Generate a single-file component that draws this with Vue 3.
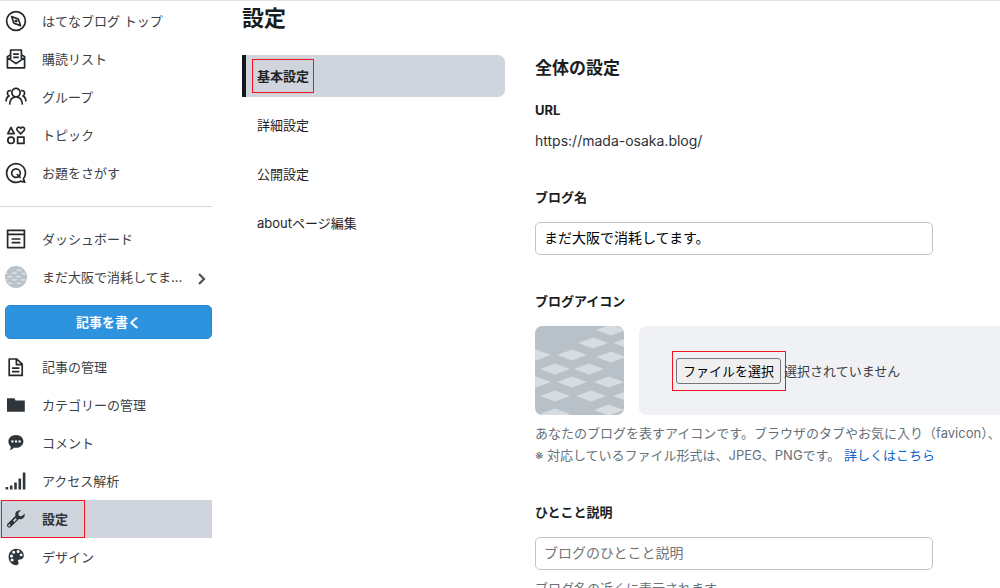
<template>
  <div class="page">
    <aside class="sidebar">
      <nav class="side-nav" aria-label="はてなブログ">
        <a v-for="item in globalItems" :key="item.label" href="#" class="side-link">
          <svg class="side-icon" :class="{ solid: item.solid }" viewBox="0 0 22 22" aria-hidden="true">
            <path :d="icons[item.icon]" />
          </svg>
          <span>{{ item.label }}</span>
        </a>
      </nav>

      <hr class="divider" />

      <nav class="side-nav" aria-label="ブログ">
        <a href="#" class="side-link">
          <svg class="side-icon" viewBox="0 0 22 22" aria-hidden="true">
            <path :d="icons.dashboard" />
          </svg>
          <span>ダッシュボード</span>
        </a>
        <a href="#" class="side-link">
          <svg class="side-avatar" viewBox="0 0 89 89" aria-hidden="true">
            <rect class="tile-bg" width="89" height="89" />
            <path v-for="(t, i) in tiles" :key="i" class="tile" :d="tilePath(t)" />
          </svg>
          <span class="blog-name">まだ大阪で消耗してま...</span>
          <svg class="chevron" viewBox="0 0 10 16" aria-hidden="true">
            <path d="M2 5l5 5-5 5" />
          </svg>
        </a>
      </nav>

      <button type="button" class="write-button">記事を書く</button>

      <nav class="side-nav" aria-label="ブログ管理">
        <a
          v-for="item in blogItems"
          :key="item.label"
          href="#"
          class="side-link"
          :class="{ current: item.current }"
        >
          <svg class="side-icon" :class="{ solid: item.solid }" viewBox="0 0 22 22" aria-hidden="true">
            <path :d="icons[item.icon]" />
          </svg>
          <span>{{ item.label }}</span>
          <span v-if="item.current" class="mark mark-side"></span>
        </a>
      </nav>
    </aside>

    <section class="tabs-column">
      <h1 class="page-title">設定</h1>
      <nav class="tabs" aria-label="設定">
        <a v-for="tab in tabs" :key="tab" href="#" class="tab" :class="{ active: tab === activeTab }">
          <span class="tab-label">{{ tab }}<span v-if="tab === activeTab" class="mark mark-tab"></span></span>
        </a>
      </nav>
    </section>

    <main class="content">
      <h2 class="section-title">全体の設定</h2>

      <div class="field">
        <h3 class="field-label">URL</h3>
        <p class="url">https://mada-osaka.blog/</p>
      </div>

      <div class="field">
        <label class="field-label" for="blog-name">ブログ名</label>
        <input id="blog-name" v-model="blogName" class="text-input" type="text" />
      </div>

      <div class="field">
        <h3 class="field-label">ブログアイコン</h3>
        <div class="icon-row">
          <svg class="blog-icon" viewBox="0 0 89 89" aria-hidden="true">
            <rect class="tile-bg" width="89" height="89" />
            <path v-for="(t, i) in tiles" :key="i" class="tile" :d="tilePath(t)" />
          </svg>
          <div class="file-box">
            <input ref="fileInput" type="file" accept="image/png,image/jpeg" hidden />
            <span class="file-pick">
              <button type="button" class="file-button" @click="fileInput.click()">ファイルを選択</button>
              <span class="mark mark-file"></span>
            </span>
            <span>選択されていません</span>
          </div>
        </div>
        <p class="help">
          あなたのブログを表すアイコンです。ブラウザのタブやお気に入り（favicon）、ス<br />
          ※ 対応しているファイル形式は、JPEG、PNGです。 <a href="#" class="help-link">詳しくはこちら</a>
        </p>
      </div>

      <div class="field">
        <label class="field-label" for="blog-description">ひとこと説明</label>
        <input id="blog-description" class="text-input" type="text" placeholder="ブログのひとこと説明" />
        <p class="help">ブログ名の近くに表示されます。</p>
      </div>
    </main>
  </div>
</template>

<script setup>
import { ref } from 'vue'

const blogName = ref('まだ大阪で消耗してます。')
const fileInput = ref(null)

const tabs = ['基本設定', '詳細設定', '公開設定', 'aboutページ編集']
const activeTab = ref('基本設定')

const globalItems = [
  { label: 'はてなブログ トップ', icon: 'compass' },
  { label: '購読リスト', icon: 'inbox' },
  { label: 'グループ', icon: 'group' },
  { label: 'トピック', icon: 'topic' },
  { label: 'お題をさがす', icon: 'odai' },
]

const blogItems = [
  { label: '記事の管理', icon: 'entry' },
  { label: 'カテゴリーの管理', icon: 'folder', solid: true },
  { label: 'コメント', icon: 'comment', solid: true },
  { label: 'アクセス解析', icon: 'chart', solid: true },
  { label: '設定', icon: 'wrench', solid: true, current: true },
  { label: 'デザイン', icon: 'palette', solid: true },
]

const icons = {
  compass:
    'M11 1.6a9.4 9.4 0 1 0 0 18.8a9.4 9.4 0 1 0 0-18.8z M6.7 6.6l6.6 2.4l2.2 6.6l-6.6-2.4z M10.4 11a.7.7 0 1 0 1.4 0a.7.7 0 1 0-1.4 0',
  inbox:
    'M5.6 12V2h10.8v10 M5.6 6.6L2.4 8.6v11.2h17.2V8.6l-3.2-2 M2.4 9.6l8.6 6l8.6-6 M8.2 6.2h5.6 M8.2 9.4h5.6',
  group:
    'M11 2.4a4.2 4.2 0 1 0 0 8.4a4.2 4.2 0 1 0 0-8.4z M4.6 18.6c.3-4.6 2.6-7.6 6.4-7.6s6.1 3 6.4 7.6 M6 4.6c-2-.4-3.6.7-3.6 2.6c0 1.3.7 2.2 1.7 2.7c-1.9.8-2.9 2.6-3 5.6 M16 4.6c2-.4 3.6.7 3.6 2.6c0 1.3-.7 2.2-1.7 2.7c1.9.8 2.9 2.6 3 5.6',
  topic:
    'M6 3.4L9.2 9.6H2.8z M15.7 9.8l-3.3-3.3c-1.8-2.2 1.4-4.7 3.3-2.2c1.9-2.5 5.1 0 3.3 2.2z M6 13.1a3.2 3.2 0 1 0 0 6.4a3.2 3.2 0 1 0 0-6.4z M12.6 13.2h6.4v6.2h-6.4z',
  odai:
    'M18.4 16.8A9.4 9.4 0 1 0 15.6 19.2L19.8 20.2z M11 6.8a4.3 4.3 0 1 0 0 8.6a4.3 4.3 0 1 0 0-8.6z M11.8 12l3.8 3.8',
  dashboard: 'M2.6 2.4h16.8v17.2H2.6z M2.6 6.4h16.8 M6.6 11h8.8 M6.6 14.6h8.8',
  entry: 'M4.2 3h7.6l5.4 5.2v11.2h-13z M11.4 3v5.6h5.6 M7 12.2h7.4 M7 15.6h7.4',
  folder: 'M2 4.2h7.4l1.2 2.2h9.2v11.4H2z',
  comment:
    'M11 3c4.2 0 7.4 2.8 7.4 6.4s-3.2 6.4-7.4 6.4c-.8 0-1.4-.1-2-.2c-1.2 1.5-2.6 2.2-4.4 2.4c.9-1 1.3-2 1.3-3.2C4.5 13.6 3.4 11.7 3.4 9.4C3.4 5.8 6.8 3 11 3z M6.2 9.4a1.2 1.2 0 1 0 2.4 0a1.2 1.2 0 1 0-2.4 0z M9.8 9.4a1.2 1.2 0 1 0 2.4 0a1.2 1.2 0 1 0-2.4 0z M13.4 9.4a1.2 1.2 0 1 0 2.4 0a1.2 1.2 0 1 0-2.4 0z',
  chart: 'M.6 17h2.6v2.6H.6z M4.9 15.4h2.6v4.2H4.9z M9.2 12.4h2.6v7.2H9.2z M13.5 8.4h2.6v11.2h-2.6z M17.8 2.4h2.6v17.2h-2.6z',
  wrench:
    'M19.6 5.8c.9 3.4-2.2 6.3-5.6 5.3L5.8 19c-2.2 1.8-5-.9-3.3-3.2l8-8C9.4 4.6 12.4 1.4 16 2.3L13.3 5l.5 2.7l2.8.6z M4.2 16.2a1.1 1.1 0 1 0 .1 0z M8 12.7l1.2 1.2l2.6-2.6l-1.2-1.2z',
  palette:
    'M11.2 2.8c4.4 0 7.6 2.9 7.6 6.7c0 2.7-1.7 4-4 3.9c-1.7-.1-2.4 1-1.6 2.2c1 1.6.4 3.6-2 3.6c-4.4 0-7.6-3.6-7.6-8.2S6.8 2.8 11.2 2.8z M5 9.9a1.5 1.5 0 1 0 3 0a1.5 1.5 0 1 0-3 0z M7.2 6.2a1.5 1.5 0 1 0 3 0a1.5 1.5 0 1 0-3 0z M11.6 5.6a1.5 1.5 0 1 0 3 0a1.5 1.5 0 1 0-3 0z M14.7 8.9a1.4 1.4 0 1 0 2.8 0a1.4 1.4 0 1 0-2.8 0z M5.6 13.9a1.5 1.5 0 1 0 3 0a1.5 1.5 0 1 0-3 0z',
}

// Centers of the diamonds in the default blog icon
const tiles = [
  [76, 4], [58, 17], [93, 17], [1, 29], [37, 29], [76, 31], [20, 43], [54, 43],
  [1, 56], [37, 56], [74, 56], [20, 70], [56, 70], [93, 70], [74, 84], [20, 88],
]

const tilePath = ([x, y]) => `M${x - 15} ${y}l15-5.6l15 5.6l-15 5.6z`
</script>

<style>
body {
  margin: 0;
  background: #fff;
}
</style>

<style scoped>
.page {
  display: grid;
  grid-template-columns: 212px 263px minmax(0, 1fr);
  column-gap: 30px;
  height: 100vh;
  overflow: hidden;
  box-sizing: border-box;
  border-top: 1px solid #e2e3e5;
  font-family: Inter, 'Noto Sans CJK JP', sans-serif;
  font-size: 13px;
  line-height: 20px;
  color: #2d3236;
}

h1,
h2,
h3,
p {
  margin: 0;
}

a {
  text-decoration: none;
}

/* Sidebar */
.sidebar {
  padding-top: 1px;
}

.side-link {
  position: relative;
  display: flex;
  align-items: center;
  gap: 15px;
  height: 38px;
  padding-left: 5px;
  color: #3b4146;
}

.side-icon,
.side-avatar {
  flex: none;
  width: 22px;
  height: 22px;
}

.side-icon path {
  fill: none;
  stroke: #23282c;
  stroke-width: 1.7;
  stroke-linejoin: round;
}

.side-icon.solid path {
  fill: #2f363b;
  fill-rule: evenodd;
  stroke: none;
}

.side-avatar {
  border-radius: 50%;
}

.blog-name {
  flex: 1;
  white-space: nowrap;
}

.chevron {
  flex: none;
  width: 10px;
  height: 16px;
  margin-right: 5px;
}

.chevron path {
  fill: none;
  stroke: #4b5359;
  stroke-width: 2.2;
}

.side-link:has(.chevron) {
  gap: 15px;
}

.divider {
  height: 1px;
  margin: 14px 0 13px;
  border: 0;
  background: #d3d8dd;
}

.write-button {
  display: block;
  width: calc(100% - 5px);
  height: 34px;
  margin: 9px 0 9px 5px;
  padding: 0;
  border: 1px solid #2288d6;
  border-radius: 5px;
  background: #2d93df;
  color: #fff;
  font: inherit;
  font-weight: 700;
}

.current {
  background: #d0d5dd;
  color: #2d3236;
  font-weight: 700;
}

/* Red call-out frames */
.mark {
  position: absolute;
  box-sizing: border-box;
  border: 1px solid #f01420;
  pointer-events: none;
}

.mark-side {
  top: 0;
  bottom: 0;
  left: 1px;
  width: 84px;
}

.mark-tab {
  inset: -7px -5px;
}

.mark-file {
  inset: -7px -5px -7px -4px;
}

/* Setting tabs */
.page-title {
  padding: 2px 0 22px;
  font-size: 22px;
  line-height: 30px;
  color: #1b1e21;
}

.tabs {
  display: flex;
  flex-direction: column;
  gap: 7px;
}

.tab {
  display: flex;
  align-items: center;
  height: 42px;
  padding-left: 11px;
  border-left: 4px solid transparent;
  color: #1f2326;
}

.tab.active {
  border-left-color: #16191c;
  border-radius: 0 7px 7px 0;
  background: #d0d5dd;
  font-weight: 700;
}

.tab-label {
  position: relative;
}

/* Settings form */
.content {
  display: flex;
  flex-direction: column;
  padding-top: 55px;
}

.section-title {
  margin-bottom: 20px;
  font-size: 17px;
  line-height: 24px;
  color: #1b1e21;
}

.field {
  margin-bottom: 36px;
}

.field-label {
  display: block;
  margin-bottom: 15px;
  font-size: 13px;
  font-weight: 700;
  line-height: 20px;
  color: #1b1e21;
}

.url {
  margin-top: -4px;
  font-size: 14px;
}

.text-input {
  display: block;
  box-sizing: border-box;
  width: 100%;
  max-width: 398px;
  height: 33px;
  padding: 0 8px 3px;
  border: 1px solid #bcc6d0;
  border-radius: 5px;
  background: #fff;
  color: #000;
  font: inherit;
  font-size: 14px;
}

.text-input::placeholder {
  color: #757575;
  opacity: 1;
}

.icon-row {
  display: flex;
  gap: 15px;
}

.blog-icon {
  flex: none;
  width: 89px;
  height: 89px;
  border-radius: 7px;
}

.tile-bg {
  fill: #b8c1c7;
}

.tile {
  fill: #d6dce0;
}

.file-box {
  display: flex;
  flex: 1;
  align-items: center;
  gap: 3px;
  padding-left: 37px;
  border-radius: 7px 0 0 7px;
  background: #eff1f5;
  color: #3b4146;
}

.file-pick {
  position: relative;
}

.file-button {
  display: block;
  height: 26px;
  padding: 0 6px;
  border: 1px solid #767676;
  border-radius: 3px;
  background: #efefef;
  color: #000;
  font: inherit;
}

.help {
  margin-top: 7px;
  line-height: 22px;
  color: #66717a;
  white-space: nowrap;
}

.help-link {
  color: #0d63d1;
}
</style>
